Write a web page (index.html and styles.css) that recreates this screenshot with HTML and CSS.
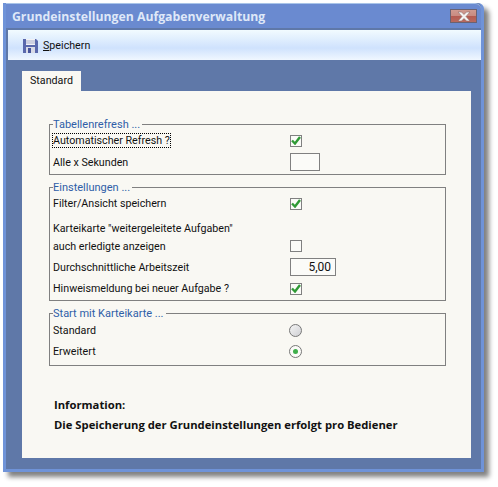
FILE: index.html
```html
<!DOCTYPE html>
<html>
<head>
    <meta charset="utf-8">
    <title>Grundeinstellungen Aufgabenverwaltung</title>
    <link rel="stylesheet" href="styles.css">
</head>
<body>
<div class="window">
    <div class="titleBar">
        <span class="titleText">Grundeinstellungen Aufgabenverwaltung</span>
        <span class="closeBtn">
            <svg width="16" height="11" viewBox="0 0 16 11"><path d="M2 1h3.500l2.500 2.500 2.500-2.500h3.500l-4 4.500 4 4.500h-3.500l-2.500-2.500-2.500 2.500h-3.500l4-4.500z" fill="#f4f2f2" stroke="#8d6a68" stroke-width=".6"/></svg>
        </span>
    </div>
    <div class="toolBar">
        <svg class="saveIcon" width="15" height="15" viewBox="0 0 15 15">
            <path d="M0 1h13l2 2v12h-15z" fill="#5a68ac"/>
            <rect x="3" y="1" width="9" height="6" fill="#f2f2f6"/>
            <path d="M3 3h9M3 5h9" stroke="#a9aecb"/>
            <rect x="3" y="9" width="9" height="6" fill="#d8dae6"/>
            <rect x="5" y="10" width="3" height="5" fill="#47549c"/>
        </svg>
        <span class="saveLabel"><u>S</u>peichern</span>
    </div>
    <div class="content">
        <div class="tab">Standard</div>
        <div class="panel">
            <fieldset class="group">
                <legend>Tabellenrefresh ...</legend>
                <div class="row"><span class="label"><span class="focused">Automatischer Refresh ?</span></span><span class="check"><svg width="10" height="9" viewBox="0 0 10 9"><path d="M1 4.500l3 3 5-6.500" fill="none" stroke="#2f9a35" stroke-width="2.400"/></svg></span></div>
                <div class="row rowInput"><span class="label">Alle x Sekunden</span><span class="field fieldShort"></span></div>
            </fieldset>
            <fieldset class="group">
                <legend>Einstellungen ...</legend>
                <div class="row"><span class="label">Filter/Ansicht speichern</span><span class="check"><svg width="10" height="9" viewBox="0 0 10 9"><path d="M1 4.500l3 3 5-6.500" fill="none" stroke="#2f9a35" stroke-width="2.400"/></svg></span></div>
                <div class="row rowHead"><span class="label">Karteikarte "weitergeleitete Aufgaben"</span></div>
                <div class="row rowShort"><span class="label">auch erledigte anzeigen</span><span class="check"></span></div>
                <div class="row rowInput"><span class="label">Durchschnittliche Arbeitszeit</span><span class="field fieldLong">5,00</span></div>
                <div class="row"><span class="label">Hinweismeldung bei neuer Aufgabe ?</span><span class="check"><svg width="10" height="9" viewBox="0 0 10 9"><path d="M1 4.500l3 3 5-6.500" fill="none" stroke="#2f9a35" stroke-width="2.400"/></svg></span></div>
            </fieldset>
            <fieldset class="group groupStart">
                <legend>Start mit Karteikarte ...</legend>
                <div class="row"><span class="label">Standard</span><span class="radio"></span></div>
                <div class="row"><span class="label">Erweitert</span><span class="radio selected"><span class="dot"></span></span></div>
            </fieldset>
            <div class="info">
                <p>Information:</p>
                <p>Die Speicherung der Grundeinstellungen erfolgt pro Bediener</p>
            </div>
        </div>
    </div>
</div>
</body>
</html>
```

FILE: styles.css
```css
* {
    box-sizing: border-box;
}

html, body {
    margin: 0;
    padding: 0;
    background: #fff;
}

body {
    width: 498px;
    height: 487px;
    overflow: hidden;
    padding: 3px 0 0 3px;
    font-family: Roboto, "Liberation Sans", sans-serif;
    font-size: 10.7px;
    color: #111;
}

.window {
    width: 481px;
    height: 469px;
    display: flex;
    flex-direction: column;
    background: #5f78a8;
    border: 3px solid #6f93d8;
    border-top: 0;
    border-radius: 0 6px 0 0;
    box-shadow: 5px 5px 5px #808080;
}

.titleBar {
    height: 25px;
    margin-bottom: 2px;
    display: flex;
    align-items: center;
    justify-content: space-between;
    padding: 0 4px 0 6px;
    background: #6a8ad0;
    border-top: 1px solid #a9c4e8;
    border-radius: 0 6px 0 0;
}

.titleText {
    font-family: "Open Sans", sans-serif;
    font-weight: bold;
    font-size: 12.25px;
    color: #dfe8f8;
}

.closeBtn {
    width: 27px;
    height: 14px;
    display: flex;
    align-items: center;
    justify-content: center;
    border: 1px solid #6a6272;
    background: linear-gradient(#d09a90, #c98a80 50%, #b45a50 50%, #b86a60);
}

.toolBar {
    height: 30px;
    margin-left: 2px;
    display: flex;
    align-items: center;
    gap: 5px;
    padding-left: 15px;
    background: linear-gradient(#f2fbff, #cfe2fd 60%, #f0f7ff);
}

.saveIcon {
    display: block;
}

.content {
    flex: 1;
    padding: 11px 10px 11px 16px;
    display: flex;
    flex-direction: column;
}

.tab {
    width: 59px;
    height: 20px;
    line-height: 20px;
    padding-left: 8px;
    background: #f9f8f3;
}

.panel {
    flex: 1;
    padding: 26px 25px 0 27px;
    background: #f9f8f3;
}

.group {
    margin: 0 0 5px;
    padding: 0 0 1px 3px;
    border: 1px solid #808080;
}

.group legend {
    padding: 1px 2px 0 0;
    margin-bottom: -1px;
    height: 14px;
    line-height: 14px;
    font-size: 11px;
    color: #2f5ea8;
}

.row {
    height: 21px;
    display: flex;
    align-items: center;
}

.label {
    width: 237px;
    flex: none;
    line-height: 12px;
    padding-top: 1px;
}

.groupStart {
    padding-top: 1px;
    padding-bottom: 3px;
}

.groupStart .label {
    padding-top: 0;
}

.focused {
    outline: 1px dotted #000;
}

.rowHead {
    margin-top: 6px;
    height: 17px;
}

.rowShort {
    height: 18px;
    margin-bottom: 1px;
}

.rowInput {
    height: 22px;
}

.check {
    width: 12px;
    height: 12px;
    display: flex;
    align-items: center;
    justify-content: center;
    border: 1px solid #808080;
    background: #fbfbf8;
}

.field {
    height: 18px;
    border: 1px solid #808080;
    background: #fbfbf8;
    text-align: right;
    line-height: 16px;
    padding-right: 4px;
}

.fieldShort {
    width: 30px;
}

.fieldLong {
    width: 46px;
    font-size: 12px;
}

.radio {
    width: 13px;
    height: 13px;
    margin-left: -1px;
    display: flex;
    align-items: center;
    justify-content: center;
    border: 1px solid #777;
    border-radius: 50%;
    background: linear-gradient(135deg, #f4f4f4, #cfd0d4);
}

.radio.selected {
    background: #fbfbf8;
}

.dot {
    width: 5px;
    height: 5px;
    border-radius: 50%;
    background: #3fae4a;
}

.info {
    margin-top: 32px;
    padding-left: 5px;
    font-family: "Open Sans", sans-serif;
    font-weight: bold;
    font-size: 11.25px;
}

.info p {
    margin: 0 0 7px;
    line-height: 13px;
}
```
